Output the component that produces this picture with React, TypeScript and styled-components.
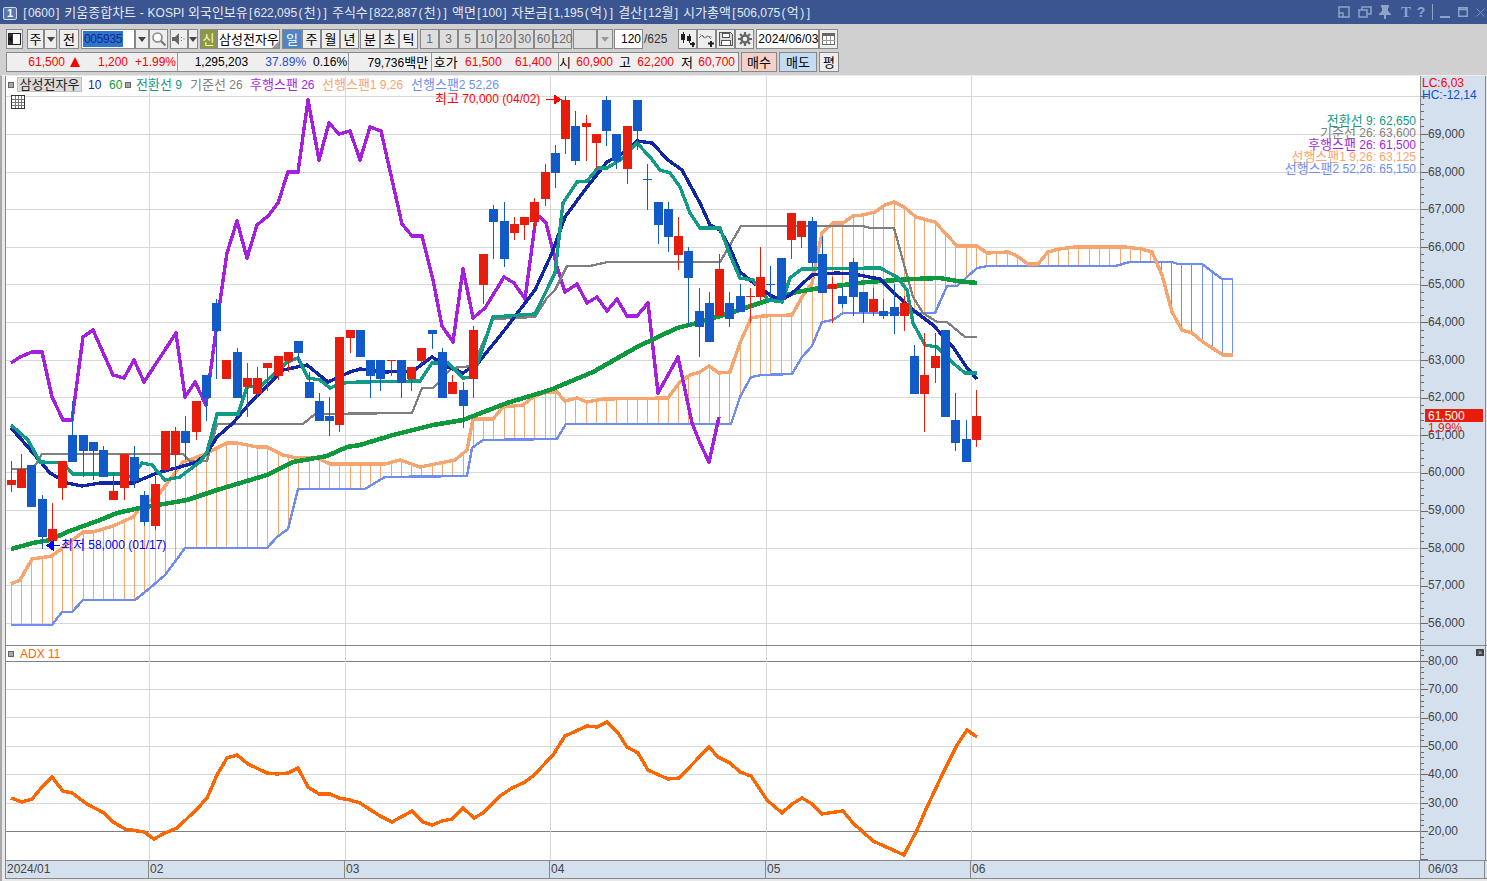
import React from "react";
import styled, { createGlobalStyle } from "styled-components";

const GlobalStyle = createGlobalStyle`
  html, body {
    margin: 0;
    padding: 0;
    background: #d0d0d0;
    overflow: hidden;
  }
  body {
    font-family: "Liberation Sans", "Noto Sans CJK KR", sans-serif;
    font-size: 12px;
    line-height: 1;
  }
`;

// candles as [up, bodyTop, bodyBottom, wickTop, wickBottom], in page pixels
type Candle = [number, number, number, number, number];

const candles: Candle[] = [
  [1, 480, 485, 461, 492], [1, 469, 488, 454, 488], [0, 465, 507, 465, 507], [0, 499, 537, 495, 549],
  [1, 529, 541, 503, 541], [1, 461, 488, 461, 500], [0, 435, 462, 401, 462], [0, 435, 451, 435, 477],
  [0, 442, 451, 442, 480], [0, 450, 477, 446, 477], [1, 491, 500, 472, 500], [1, 454, 488, 454, 500],
  [0, 457, 481, 446, 488], [0, 495, 522, 491, 526], [1, 484, 526, 476, 530], [1, 431, 470, 431, 473],
  [1, 431, 455, 427, 478], [0, 431, 443, 416, 460], [1, 401, 432, 401, 440], [0, 375, 398, 375, 421],
  [0, 303, 331, 299, 379], [1, 360, 379, 360, 379], [0, 352, 398, 348, 398], [1, 378, 387, 363, 417],
  [1, 378, 394, 367, 398], [1, 363, 368, 363, 391], [1, 356, 376, 356, 380], [1, 352, 361, 352, 372],
  [0, 341, 353, 341, 363], [0, 382, 398, 372, 398], [0, 401, 421, 393, 421], [0, 416, 421, 397, 436],
  [1, 337, 425, 337, 432], [1, 330, 338, 330, 353], [0, 330, 357, 330, 357], [0, 360, 376, 360, 398],
  [0, 360, 379, 360, 391], [1, 360, 361, 360, 376], [0, 360, 383, 360, 398], [1, 367, 379, 367, 391],
  [1, 348, 361, 348, 365], [0, 330, 334, 330, 349], [0, 352, 398, 348, 398], [1, 382, 394, 375, 394],
  [0, 390, 406, 382, 428], [1, 330, 379, 326, 398], [1, 254, 285, 254, 304], [0, 209, 222, 205, 259],
  [0, 221, 259, 202, 267], [1, 224, 233, 217, 240], [1, 217, 225, 217, 240], [1, 202, 222, 198, 229],
  [1, 172, 199, 164, 206], [0, 153, 173, 145, 188], [1, 100, 139, 96, 154], [0, 126, 161, 111, 165],
  [1, 123, 127, 115, 161], [1, 134, 143, 134, 169], [0, 100, 131, 96, 146], [0, 134, 161, 134, 169],
  [1, 126, 169, 126, 184], [0, 100, 131, 100, 150], [0, 179, 180, 164, 210], [0, 202, 225, 202, 244],
  [0, 209, 237, 202, 252], [1, 236, 255, 217, 270], [0, 251, 278, 247, 326], [0, 311, 327, 288, 357],
  [0, 303, 342, 292, 342], [1, 269, 316, 254, 316], [0, 303, 319, 292, 327], [0, 296, 312, 284, 312],
  [1, 296, 297, 288, 323], [1, 277, 297, 247, 300], [0, 284, 285, 266, 300], [0, 258, 300, 258, 300],
  [1, 213, 240, 213, 259], [1, 221, 237, 221, 248], [0, 221, 263, 217, 267], [0, 254, 293, 236, 293],
  [1, 284, 289, 277, 323], [0, 296, 304, 287, 308], [0, 262, 297, 258, 316], [0, 292, 312, 292, 323],
  [1, 299, 312, 288, 316], [0, 311, 316, 299, 319], [0, 307, 316, 284, 334], [1, 303, 316, 296, 331],
  [0, 356, 394, 345, 394], [1, 375, 394, 333, 432], [1, 356, 368, 333, 383], [0, 330, 417, 330, 417],
  [0, 420, 443, 393, 451], [0, 439, 462, 420, 462], [1, 416, 440, 390, 447],
];

type Pt = [number, number];

const ma10: Pt[] = [[11,428],[20,438],[33,453],[50,473],[67,483],[82,486],[100,483],[133,483],[157,473],[180,467],[197,462],[207,453],[217,437],[233,423],[250,403],[263,390],[283,370],[307,365],[328,382],[350,372],[360,369],[383,372],[413,371],[432,357],[448,367],[463,373],[478,363],[503,332],[535,290],[552,253],[565,217],[587,187],[607,162],[623,153],[637,141],[652,143],[668,160],[682,170],[700,203],[710,225],[720,230],[730,248],[740,272],[750,280],[770,295],[780,300],[790,295],[812,275],[837,273],[853,274],[880,279],[893,292],[913,310],[933,325],[953,347],[967,368],[977,379]];

const conversion: Pt[] = [[11,425],[28,440],[40,462],[63,463],[73,474],[120,474],[132,477],[142,463],[152,465],[165,480],[180,477],[200,462],[207,452],[217,414],[238,414],[247,387],[262,385],[287,362],[298,358],[308,378],[320,380],[330,388],[343,383],[360,382],[420,381],[432,363],[448,363],[463,378],[473,377],[493,317],[535,314],[555,273],[563,203],[577,182],[587,181],[598,168],[607,168],[623,158],[637,143],[650,157],[660,170],[670,173],[680,187],[690,213],[700,228],[720,228],[730,255],[740,278],[753,280],[768,300],[782,302],[790,278],[802,269],[880,268],[897,277],[907,290],[913,323],[925,345],[937,347],[953,363],[965,373],[977,373]];

const base: Pt[] = [[11,469],[33,469],[42,454],[183,454],[190,461],[207,461],[217,424],[303,424],[315,414],[412,413],[422,388],[433,388],[452,368],[473,366],[493,319],[535,317],[547,298],[555,290],[567,266],[590,266],[608,262],[720,262],[741,226],[863,226],[870,228],[894,228],[913,297],[923,313],[937,322],[947,322],[965,337],[977,337]];

const lagging: Pt[] = [[11,363],[20,357],[32,352],[42,352],[52,397],[63,420],[72,420],[83,337],[93,330],[113,375],[124,378],[134,360],[144,382],[176,333],[185,397],[195,382],[206,405],[217,323],[227,253],[237,221],[247,258],[257,225],[268,216],[278,203],[288,172],[298,172],[308,100],[319,160],[329,123],[339,134],[350,131],[360,160],[370,127],[381,131],[402,224],[412,236],[422,236],[433,280],[442,326],[453,342],[463,269],[473,318],[485,308],[504,277],[514,283],[525,299],[536,217],[540,217],[546,223],[557,267],[565,292],[577,284],[587,303],[597,297],[607,311],[617,299],[627,316],[637,316],[648,303],[658,393],[678,357],[692,423],[700,443],[709,462],[719,417]];

const span1: Pt[] = [[11,584],[20,580],[32,559],[52,556],[83,532],[93,532],[113,526],[133,517],[140,508],[160,493],[183,462],[203,455],[227,443],[237,443],[257,447],[267,447],[283,455],[297,458],[317,458],[330,464],[385,464],[400,460],[420,467],[440,463],[455,460],[467,450],[473,419],[493,419],[503,407],[523,405],[533,397],[547,392],[557,392],[565,401],[577,398],[587,402],[603,399],[668,398],[680,382],[690,375],[700,372],[709,366],[719,373],[730,372],[740,343],[751,318],[762,316],[792,315],[802,297],[812,283],[817,257],[822,233],[833,223],[843,223],[853,216],[863,215],[875,212],[885,205],[894,202],[904,207],[916,217],[935,222],[947,235],[957,246],[977,246],[987,253],[1008,252],[1017,256],[1028,264],[1038,264],[1048,252],[1059,249],[1075,247],[1125,247],[1142,249],[1152,252],[1162,275],[1172,312],[1182,330],[1192,333],[1203,342],[1223,355],[1233,355]];

const span2: Pt[] = [[11,625],[52,625],[62,612],[72,612],[83,600],[135,600],[150,588],[165,575],[177,559],[185,548],[267,548],[277,537],[288,529],[298,489],[365,489],[385,477],[467,476],[472,448],[483,440],[557,439],[566,424],[731,424],[740,397],[751,377],[762,375],[792,374],[802,357],[812,346],[822,322],[833,320],[843,313],[935,313],[947,286],[957,286],[977,268],[988,266],[1115,266],[1130,262],[1172,262],[1178,264],[1202,264],[1222,279],[1233,279]];

const ma60: Pt[] = [[11,549],[33,543],[50,540],[67,532],[100,520],[117,513],[140,508],[187,500],[217,490],[267,475],[293,462],[327,456],[347,447],[360,445],[393,435],[433,425],[463,420],[507,403],[550,390],[593,372],[637,347],[677,328],[697,323],[730,313],[763,302],[797,292],[820,288],[867,282],[913,279],[940,278],[957,281],[977,283]];

const adx: Pt[] = [[11,798],[22,802],[32,799],[42,787],[52,777],[63,791],[72,793],[87,804],[104,813],[113,822],[125,829],[144,832],[154,839],[165,833],[177,828],[197,809],[207,798],[217,775],[227,758],[237,755],[248,764],[267,773],[277,774],[288,773],[298,768],[308,787],[319,794],[330,794],[339,798],[350,800],[360,803],[380,816],[392,822],[412,811],[423,822],[432,825],[442,821],[452,819],[463,808],[474,818],[483,813],[500,796],[512,788],[525,782],[533,776],[553,755],[565,736],[587,726],[597,727],[607,722],[618,733],[627,747],[638,753],[648,770],[668,779],[679,778],[709,747],[718,757],[730,763],[740,772],[751,776],[767,800],[782,813],[792,804],[802,798],[812,804],[822,814],[843,811],[853,823],[873,841],[904,855],[917,830],[927,807],[943,773],[957,745],[967,730],[977,737]];

const priceRows: [string, number][] = [
  ["69,000", 134], ["68,000", 172], ["67,000", 209], ["66,000", 247], ["65,000", 284], ["64,000", 322], ["63,000", 360],
  ["62,000", 397], ["61,000", 435], ["60,000", 472], ["59,000", 510], ["58,000", 548], ["57,000", 585], ["56,000", 623],
];
const adxRows: [string, number][] = [
  ["80,00", 661], ["70,00", 689], ["60,00", 717], ["50,00", 746], ["40,00", 774], ["30,00", 803], ["20,00", 831],
];
const monthLines = [149, 345, 550, 766, 971];

const barX = (i: number) => Math.floor(11.3 + 10.266 * i);
const toPoints = (pts: Pt[]) => pts.map((p) => p.join(",")).join(" ");

const interp = (pts: Pt[], x: number) => {
  for (let i = 1; i < pts.length; i++) {
    if (x <= pts[i][0]) {
      const [x0, y0] = pts[i - 1];
      const [x1, y1] = pts[i];
      return y0 + ((y1 - y0) * (x - x0)) / (x1 - x0);
    }
  }
  return pts[pts.length - 1][1];
};

const Window = styled.div`
  width: 1487px;
  height: 881px;
  display: flex;
  flex-direction: column;
  background: #d0d0d0;
  color: #000;
`;

const TitleBar = styled.header`
  height: 24px;
  display: flex;
  align-items: center;
  background: #3a5590;
  color: #e4e8f2;
  padding: 0 2px 0 3px;
  box-sizing: border-box;
`;

const WinBadge = styled.span`
  width: 14px;
  height: 13px;
  margin-top: 3px;
  border: 1px solid #cfd8ea;
  border-radius: 2px;
  box-sizing: border-box;
  background: #5a78b0;
  color: #fff;
  font-weight: bold;
  font-size: 11px;
  display: flex;
  align-items: center;
  justify-content: center;
`;

const TitleText = styled.span`
  margin-left: 5px;
  white-space: pre;
  word-spacing: 0.4px;
`;

const Bracket = styled.span`
  margin: 0 1.3px;
`;

const Han = styled.span`
  font-size: 13px;
`;

const HanT = styled.tspan`
  font-size: 13px;
`;

const TitleTools = styled.div`
  margin-left: auto;
  display: flex;
  align-items: center;
  color: #8ea3c8;
`;

const TitleTool = styled.span<{ $w: number; $ml?: number }>`
  width: ${(p) => p.$w}px;
  margin-left: ${(p) => p.$ml ?? 0}px;
  height: 16px;
  display: flex;
  justify-content: center;
  align-items: center;
`;

const TitleGlyph = styled(TitleTool)<{ $serif?: boolean }>`
  font-weight: bold;
  font-size: ${(p) => (p.$serif ? 15 : 14)}px;
  font-family: ${(p) => (p.$serif ? '"Liberation Serif", serif' : "inherit")};
`;

const TitleSep = styled(TitleTool)`
  background: #8ea3c8;
`;

const Toolbar = styled.div`
  height: 51px;
  box-sizing: border-box;
  padding: 5px 0 0 6px;
  display: flex;
  flex-direction: column;
  gap: 3px;
`;

const Row = styled.div`
  display: flex;
  height: 20px;
`;

const Group = styled.div<{ $ml?: number }>`
  display: flex;
  margin-left: ${(p) => p.$ml ?? 0}px;
  & > * + * {
    border-left: 0;
  }
`;

const Btn = styled.button<{ $w: number; $tone?: string; $off?: boolean }>`
  width: ${(p) => p.$w}px;
  height: 20px;
  box-sizing: border-box;
  padding: 0;
  border: 1px solid #888;
  font: inherit;
  background: ${(p) => p.$tone ?? (p.$off ? "#dedede" : "#eeeeee")};
  color: ${(p) => (p.$off ? "#6a6a6a" : p.$tone === "#4f86c6" ? "#fff" : "#000")};
  display: flex;
  align-items: center;
  justify-content: center;
`;

const DropBtn = styled(Btn)`
  &::after {
    content: "";
    border-left: 4px solid transparent;
    border-right: 4px solid transparent;
    border-top: 5px solid ${(p) => (p.$off ? "#9a9a9a" : "#444")};
  }
`;

const InputBox = styled.div<{ $w: number; $align?: string }>`
  width: ${(p) => p.$w}px;
  height: 20px;
  box-sizing: border-box;
  border: 1px solid #888;
  background: #fff;
  display: flex;
  align-items: center;
  justify-content: ${(p) => p.$align ?? "flex-start"};
  padding: 0 1px;
`;

const Selected = styled.span`
  background: #2f74cf;
  color: #0c2a86;
  padding: 2px 1px;
  letter-spacing: -0.3px;
`;

const NewBadge = styled.span`
  width: 17px;
  height: 20px;
  box-sizing: border-box;
  border: 1px solid #888;
  background: #8d9a3c;
  color: #f4f6e0;
  display: flex;
  align-items: center;
  justify-content: center;
`;

const StockName = styled.div`
  position: relative;
  width: 63px;
  height: 20px;
  box-sizing: border-box;
  border: 1px solid #888;
  background: #fff;
  padding-left: 1px;
  display: flex;
  align-items: center;
  overflow: hidden;
  white-space: nowrap;
  &::after {
    content: "";
    position: absolute;
    right: 0;
    bottom: 0;
    border-left: 7px solid transparent;
    border-bottom: 7px solid #9a9a9a;
  }
`;

const Plain = styled.span<{ $ml?: number; $c?: string }>`
  margin-left: ${(p) => p.$ml ?? 0}px;
  color: ${(p) => p.$c ?? "#333"};
  align-self: center;
`;

const InfoBar = styled.div`
  width: 733px;
  height: 20px;
  box-sizing: border-box;
  display: flex;
  border: 1px solid #888;
  background: #efefef;
`;

const InfoCell = styled.div<{ $w: number }>`
  width: ${(p) => p.$w}px;
  display: flex;
  align-items: center;
  border-right: 1px solid #999;
  &:last-child {
    border-right: 0;
  }
`;

const Val = styled.span<{ $w: number; $c?: string }>`
  width: ${(p) => p.$w}px;
  text-align: right;
  white-space: nowrap;
  color: ${(p) => p.$c ?? "#000"};
`;

const UpMark = styled.span`
  margin-left: 5px;
  border-left: 5px solid transparent;
  border-right: 5px solid transparent;
  border-bottom: 10px solid #f00;
  width: 0;
  height: 0;
`;

const Chart = styled.div`
  flex: 1;
  display: flex;
  flex-direction: column;
  box-sizing: border-box;
  border-left: 2px solid #a8a8a8;
  padding-left: 3px;
  background: #e8e8e8;
  border-top: 1px solid #ececec;
`;

const Pane = styled.div<{ $h: number }>`
  position: relative;
  height: ${(p) => p.$h}px;
  display: flex;
  box-sizing: border-box;
  border-bottom: 1px solid #888;
`;

const Plot = styled.div`
  width: 1415px;
  box-sizing: border-box;
  border-left: 1px solid #888;
  background: #fff;
  overflow: hidden;
  svg {
    display: block;
  }
`;

const Axis = styled.div`
  width: 66px;
  box-sizing: border-box;
  border-left: 1px solid #888;
  border-right: 1px solid #888;
  background: #d5e0ef;
  overflow: hidden;
  svg {
    display: block;
  }
`;

const Legend = styled.div<{ $top: number }>`
  position: absolute;
  top: ${(p) => p.$top}px;
  left: 3px;
  display: flex;
  align-items: center;
  white-space: pre;
`;

const Square = styled.span<{ $x?: number }>`
  width: 6px;
  height: 6px;
  background: #a8a8a8;
  border: 1px solid #666;
  box-sizing: border-box;
  ${(p) => (p.$x !== undefined ? `position: absolute; left: ${p.$x}px;` : "")}
`;

const StockTag = styled.span`
  margin-left: 3px;
  width: 65px;
  height: 15px;
  box-sizing: border-box;
  border: 1px solid #c0c0c0;
  background: #dcdcdc;
  color: #222;
  display: flex;
  align-items: center;
  justify-content: center;
`;

const LegendItem = styled.span<{ $c: string; $x: number }>`
  position: absolute;
  left: ${(p) => p.$x}px;
  color: ${(p) => p.$c};
`;

const PaneClose = styled.span`
  position: absolute;
  top: 3px;
  right: 3px;
  width: 8px;
  height: 7px;
  background: #444;
  color: #ddd;
  font-size: 7px;
  display: flex;
  align-items: center;
  justify-content: center;
`;

const DateAxis = styled.div`
  height: 18px;
  display: flex;
  box-sizing: border-box;
  border-bottom: 1px solid #888;
  border-left: 1px solid #888;
  background: #d5e0ef;
  color: #444;
`;

const DateCell = styled.div<{ $w: number; $pad?: number }>`
  width: ${(p) => p.$w}px;
  box-sizing: border-box;
  border-right: 1px solid #888;
  padding: 0 0 2px ${(p) => p.$pad ?? 1}px;
  display: flex;
  align-items: center;
`;

const ChartText = styled.text<{ $c?: string }>`
  font-size: 12px;
  fill: ${(p) => p.$c ?? "#444"};
`;

const Mixed = ({ s }: { s: string }) => (
  <>
    {s.split(/([가-힣]+|[\[\]()])/).map((part, i) =>
      /[가-힣]/.test(part) ? (
        <Han key={i}>{part}</Han>
      ) : /^[\[\]()]$/.test(part) ? (
        <Bracket key={i}>{part}</Bracket>
      ) : (
        part
      )
    )}
  </>
);

const MixedT = ({ s }: { s: string }) => (
  <>
    {s.split(/([가-힣]+)/).map((part, i) =>
      /[가-힣]/.test(part) ? <HanT key={i}>{part}</HanT> : part
    )}
  </>
);

const Line = ({ pts, c, w }: { pts: Pt[]; c: string; w: number }) => (
  <polyline points={toPoints(pts)} fill="none" stroke={c} strokeWidth={w} strokeLinejoin="round" shapeRendering="crispEdges" />
);

const Grid = ({ rows, y0, h, dark = [] }: { rows: [string, number][]; y0: number; h: number; dark?: number[] }) => (
  <>
    {rows.map(([, y]) => (
      <rect key={y} x={6} y={y} width={1414} height={1} fill={dark.includes(y) ? "#808080" : "#d8d8d8"} />
    ))}
    {monthLines.map((x) => (
      <rect key={x} x={x} y={y0} width={1} height={h} fill="#d8d8d8" />
    ))}
  </>
);

const PricePlot = () => {
  const hatch = [];
  for (let i = 0; i < 120; i++) {
    const x = barX(i) + 0.5;
    const y1 = interp(span1, x);
    const y2 = interp(span2, x);
    hatch.push(
      <line key={i} x1={x} x2={x} y1={y1} y2={y2} stroke={y1 < y2 ? "#f8a46f" : "#6f8df0"} strokeWidth={1} shapeRendering="crispEdges" />
    );
  }
  return (
    <svg width={1414} height={569} viewBox="6 76 1414 569">
      <Grid rows={[["70,000", 96], ...priceRows]} y0={76} h={569} />
      {hatch}
      <Line pts={span2} c="#6f8df0" w={2.4} />
      <Line pts={span1} c="#f8a46f" w={3.4} />
      <Line pts={lagging} c="#a61fe0" w={3.4} />
      <Line pts={base} c="#7f7f7f" w={2.3} />
      <Line pts={ma60} c="#0e9a3c" w={4.5} />
      <Line pts={ma10} c="#1226a8" w={3.4} />
      <Line pts={conversion} c="#0f9b84" w={3.4} />
      {candles.map(([up, top, bottom, wt, wb], i) => {
        const x = barX(i);
        const c = up ? "#e81c0a" : "#125ac8";
        return (
          <g key={i} fill={c}>
            <rect x={x} y={wt} width={1} height={wb - wt} />
            <rect x={x - 4} y={top} width={9} height={bottom - top} />
          </g>
        );
      })}
      <g>
        <rect x={11.5} y={95.5} width={13} height={13} fill="#fff" stroke="#333" />
        <path d="M12 99h12M12 102h12M12 105h12M15.5 96v12M18.5 96v12M21.5 96v12" stroke="#777" shapeRendering="crispEdges" />
      </g>
      <ChartText x={435} y={103} $c="#f00">
        <MixedT s="최고 70,000 (04/02)" />
      </ChartText>
      <path d="M546 99.5h9M554 95v9l7-4.500z" stroke="#f00" fill="#f00" shapeRendering="crispEdges" />
      <ChartText x={61} y={549} $c="#00f">
        <MixedT s="최저 58,000 (01/17)" />
      </ChartText>
      <path d="M60 545.500h-9M53 541v9l-6-4.500z" stroke="#00f" fill="#00f" shapeRendering="crispEdges" />
      <g textAnchor="end">
        <ChartText x={1416} y={125} $c="#0f9b84"><MixedT s="전환선 9: 62,650" /></ChartText>
        <ChartText x={1416} y={137} $c="#7f7f7f"><MixedT s="기준선 26: 63,600" /></ChartText>
        <ChartText x={1416} y={149} $c="#a61fe0"><MixedT s="후행스팬 26: 61,500" /></ChartText>
        <ChartText x={1416} y={161} $c="#f8a46f"><MixedT s="선행스팬1 9,26: 63,125" /></ChartText>
        <ChartText x={1416} y={173} $c="#6f8df0"><MixedT s="선행스팬2 52,26: 65,150" /></ChartText>
      </g>
    </svg>
  );
};

const AxisTicks = ({ rows, minor, y0, y1 }: { rows: [string, number][]; minor: number; y0: number; y1: number }) => {
  const ticks = [];
  const first = rows[0][1];
  for (let k = -40; k < 200; k++) {
    const y = Math.round(first + k * minor);
    if (y >= y0 && y < y1) ticks.push(<rect key={k} x={1421} y={y} width={k % 5 === 0 ? 7 : 3} height={1} fill="#666" />);
  }
  return <>{ticks}</>;
};

const PriceAxis = () => (
  <svg width={64} height={569} viewBox="1421 76 64 569">
    <AxisTicks rows={priceRows} minor={7.53} y0={96} y1={645} />
    {priceRows.map(([label, y]) => (
      <ChartText key={y} x={1428} y={y + 4}>{label}</ChartText>
    ))}
    <rect x={1425} y={422} width={58} height={8} fill="#d5e0ef" />
    <rect x={1425} y={409} width={58} height={13} fill="#e81c0a" />
    <ChartText x={1428} y={420} $c="#fff">61,500</ChartText>
    <ChartText x={1428} y={432} $c="#e81c0a">1,99%</ChartText>
    <ChartText x={1422} y={87} $c="#f00">LC:6,03</ChartText>
    <ChartText x={1422} y={99} $c="#0a50d8">HC:-12,14</ChartText>
  </svg>
);

const AdxPlot = () => (
  <svg width={1414} height={214} viewBox="6 646 1414 214">
    <Grid rows={adxRows} y0={646} h={214} dark={[661, 831]} />
    <Line pts={adx} c="#ff6600" w={3.4} />
  </svg>
);

const AdxAxis = () => (
  <svg width={64} height={214} viewBox="1421 646 64 214">
    <AxisTicks rows={adxRows} minor={5.67} y0={646} y1={860} />
    {adxRows.map(([label, y]) => (
      <ChartText key={y} x={1428} y={y + 4}>{label}</ChartText>
    ))}
  </svg>
);

const Icon = styled.svg`
  display: block;
`;

const ChartTypeIcon = () => (
  <Icon width={15} height={16} viewBox="0 0 15 16" shapeRendering="crispEdges">
    <rect x={1.500} y={2.500} width={12} height={11} fill="#fff" stroke="#222" />
    <rect x={2} y={3} width={4} height={10} fill="#333" />
    <path d="M1 8l4-3v6z" fill="#111" />
  </Icon>
);

const SearchIcon = () => (
  <Icon width={16} height={16} viewBox="0 0 16 16">
    <circle cx={6.500} cy={6.500} r={4.500} fill="#fff" stroke="#888" strokeWidth={1.600} />
    <path d="M10 10l4.500 4.500" stroke="#777" strokeWidth={2.200} />
  </Icon>
);

const SpeakerIcon = () => (
  <Icon width={16} height={14} viewBox="0 0 16 14">
    <path d="M1 5h3l4-4v12l-4-4H1z" fill="#666" />
    <path d="M10 5h1v1h-1zM10 8h1v1h-1zM12.500 6.500h1v1h-1z" fill="#666" />
  </Icon>
);

const CandleAddIcon = () => (
  <Icon width={17} height={16} viewBox="0 0 17 16" shapeRendering="crispEdges">
    <path d="M4 1v11M10 3v9" stroke="#222" />
    <rect x={2} y={3} width={4} height={6} fill="#222" />
    <rect x={8} y={5} width={4} height={5} fill="#222" />
    <path d="M11 13h5M13.500 11v5" stroke="#222" strokeWidth={2} />
  </Icon>
);

const LineAddIcon = () => (
  <Icon width={17} height={16} viewBox="0 0 17 16">
    <path d="M1 7l3-3 3 3 3-2 3 3" fill="none" stroke="#666" />
    <path d="M2 3l4 4 3-2 5 1" fill="none" stroke="#999" />
    <path d="M10 12.500h6M13 10v6" stroke="#222" strokeWidth={2} />
  </Icon>
);

const SaveIcon = () => (
  <Icon width={16} height={16} viewBox="0 0 16 16" shapeRendering="crispEdges">
    <path d="M1.500 1.500h11l2 2v11h-13z" fill="#ddd" stroke="#555" />
    <rect x={4.500} y={2.500} width={7} height={4} fill="#fff" stroke="#555" />
    <rect x={3.500} y={9.500} width={9} height={5} fill="#fff" stroke="#555" />
  </Icon>
);

const GearIcon = () => (
  <Icon width={16} height={16} viewBox="0 0 16 16">
    <circle cx={8} cy={8} r={3.500} fill="none" stroke="#666" strokeWidth={2.500} />
    <path d="M8 1v3M8 12v3M1 8h3M12 8h3M3 3l2 2M11 11l2 2M13 3l-2 2M5 11l-2 2" stroke="#666" strokeWidth={2.200} />
  </Icon>
);

const CalendarIcon = () => (
  <Icon width={15} height={14} viewBox="0 0 15 14" shapeRendering="crispEdges">
    <rect x={1.500} y={1.500} width={12} height={11} fill="#fff" stroke="#666" />
    <rect x={1} y={1} width={13} height={3} fill="#666" />
    <path d="M1 8h13M5.500 4v8M9.500 4v8" stroke="#999" />
  </Icon>
);

const titleIcon = { fill: "none", stroke: "currentColor", strokeWidth: 1.5 };

const TitleIcons = () => (
  <TitleTools>
    <TitleTool $w={12}>
      <Icon width={12} height={12} viewBox="0 0 12 12" {...titleIcon}>
        <path d="M1 1h10v10H1zM1 7h4v4" />
      </Icon>
    </TitleTool>
    <TitleTool $w={14} $ml={8}>
      <Icon width={14} height={12} viewBox="0 0 14 12" {...titleIcon}>
        <path d="M4 4V1h9v7H9M1 4h8v7H1z" />
      </Icon>
    </TitleTool>
    <TitleTool $w={12} $ml={7}>
      <Icon width={12} height={14} viewBox="0 0 12 14">
        <path d="M2 0h8v2L9 3v3l3 3v1H7v4H5v-4H0V9l3-3V3L2 2z" fill="currentColor" />
      </Icon>
    </TitleTool>
    <TitleGlyph $w={12} $ml={9} $serif>T</TitleGlyph>
    <TitleGlyph $w={12} $ml={3}>?</TitleGlyph>
    <TitleSep $w={1} $ml={5} />
    <TitleTool $w={10} $ml={7}>
      <Icon width={10} height={12} viewBox="0 0 10 12">
        <rect x={0} y={10} width={10} height={2} fill="currentColor" />
      </Icon>
    </TitleTool>
    <TitleTool $w={10} $ml={8}>
      <Icon width={10} height={10} viewBox="0 0 10 10" {...titleIcon}>
        <path d="M.700.700h8.600v8.600H.700zM.700 2.500h8.600" />
      </Icon>
    </TitleTool>
    <TitleTool $w={9} $ml={8}>
      <Icon width={9} height={9} viewBox="0 0 9 9" fill="none" stroke="#7d93bd">
        <path d="M.500.500l8 8M8.500.500l-8 8" />
      </Icon>
    </TitleTool>
  </TitleTools>
);

const App = () => (
  <>
    <GlobalStyle />
    <Window>
      <TitleBar>
        <WinBadge>1</WinBadge>
        <TitleText>
          <Mixed s="[0600] 키움종합차트 - KOSPI 외국인보유[622,095(천)] 주식수[822,887(천)] 액면[100] 자본금[1,195(억)] 결산[12월] 시가총액[506,075(억)]" />
        </TitleText>
        <TitleIcons />
      </TitleBar>
      <Toolbar>
        <Row>
          <Group>
            <Btn $w={17}><ChartTypeIcon /></Btn>
          </Group>
          <Group $ml={4}>
            <Btn $w={17}><Mixed s="주" /></Btn>
            <DropBtn $w={13} />
          </Group>
          <Group $ml={2}>
            <Btn $w={20}><Mixed s="전" /></Btn>
          </Group>
          <Group $ml={2}>
            <InputBox $w={54}><Selected>005935</Selected></InputBox>
            <DropBtn $w={14} />
            <Btn $w={19}><SearchIcon /></Btn>
          </Group>
          <Group $ml={2}>
            <Btn $w={18}><SpeakerIcon /></Btn>
            <DropBtn $w={10} />
          </Group>
          <Group $ml={2}>
            <NewBadge><Mixed s="신" /></NewBadge>
            <StockName><Mixed s="삼성전자우" /></StockName>
          </Group>
          <Group $ml={2}>
            <Btn $w={20} $tone="#4f86c6"><Mixed s="일" /></Btn>
            <Btn $w={19}><Mixed s="주" /></Btn>
            <Btn $w={19}><Mixed s="월" /></Btn>
            <Btn $w={19}><Mixed s="년" /></Btn>
          </Group>
          <Group $ml={1}>
            <Btn $w={20}><Mixed s="분" /></Btn>
            <Btn $w={19}><Mixed s="초" /></Btn>
            <Btn $w={19}><Mixed s="틱" /></Btn>
          </Group>
          <Group $ml={2}>
            {["1", "3", "5", "10", "20", "30", "60", "120"].map((n) => (
              <Btn key={n} $w={19} $off>{n}</Btn>
            ))}
          </Group>
          <Group $ml={1}>
            <Btn $w={24} $off />
            <DropBtn $w={16} $off />
          </Group>
          <Group $ml={1}>
            <InputBox $w={29} $align="flex-end"><Plain $c="#000">120</Plain></InputBox>
          </Group>
          <Plain $ml={1}>/625</Plain>
          <Group $ml={11}>
            <Btn $w={19}><CandleAddIcon /></Btn>
            <Btn $w={19}><LineAddIcon /></Btn>
            <Btn $w={19}><SaveIcon /></Btn>
            <Btn $w={19}><GearIcon /></Btn>
          </Group>
          <Group $ml={2}>
            <InputBox $w={63}><Plain $c="#000">2024/06/03</Plain></InputBox>
            <Btn $w={19}><CalendarIcon /></Btn>
          </Group>
        </Row>
        <Row>
          <InfoBar>
            <InfoCell $w={171}>
              <Val $w={58} $c="#f00">61,500</Val>
              <UpMark />
              <Val $w={48} $c="#f00">1,200</Val>
              <Val $w={48} $c="#f00">+1.99%</Val>
            </InfoCell>
            <InfoCell $w={171}>
              <Val $w={70}>1,295,203</Val>
              <Val $w={58} $c="#1a50d0">37.89%</Val>
              <Val $w={41}>0.16%</Val>
            </InfoCell>
            <InfoCell $w={82}>
              <Val $w={79}><Mixed s="79,736백만" /></Val>
            </InfoCell>
            <InfoCell $w={127}>
              <Val $w={26}><Mixed s="호가" /></Val>
              <Val $w={44} $c="#f00">61,500</Val>
              <Val $w={50} $c="#f00">61,400</Val>
            </InfoCell>
            <InfoCell $w={180}>
              <Val $w={12}><Mixed s="시" /></Val>
              <Val $w={42} $c="#f00">60,900</Val>
              <Val $w={18}><Mixed s="고" /></Val>
              <Val $w={43} $c="#f00">62,200</Val>
              <Val $w={19}><Mixed s="저" /></Val>
              <Val $w={42} $c="#f00">60,700</Val>
            </InfoCell>
          </InfoBar>
          <Group $ml={2}>
            <Btn $w={36} $tone="#f4d0c8"><Mixed s="매수" /></Btn>
          </Group>
          <Group $ml={2}>
            <Btn $w={38} $tone="#c4dcf2"><Mixed s="매도" /></Btn>
          </Group>
          <Group $ml={2}>
            <Btn $w={20}><Mixed s="평" /></Btn>
          </Group>
        </Row>
      </Toolbar>
      <Chart>
        <Pane $h={570}>
          <Plot><PricePlot /></Plot>
          <Axis><PriceAxis /></Axis>
          <Legend $top={1}>
            <Square />
            <StockTag><Mixed s="삼성전자우" /></StockTag>
            <LegendItem $x={80} $c="#1226a8">10</LegendItem>
            <LegendItem $x={101} $c="#0e9a3c">60</LegendItem>
            <Square $x={117} />
            <LegendItem $x={128} $c="#0f9b84"><Mixed s="전환선 9" /></LegendItem>
            <LegendItem $x={182} $c="#7f7f7f"><Mixed s="기준선 26" /></LegendItem>
            <LegendItem $x={242} $c="#a61fe0"><Mixed s="후행스팬 26" /></LegendItem>
            <LegendItem $x={314} $c="#f8a46f"><Mixed s="선행스팬1 9,26" /></LegendItem>
            <LegendItem $x={403} $c="#6f8df0"><Mixed s="선행스팬2 52,26" /></LegendItem>
          </Legend>
        </Pane>
        <Pane $h={215}>
          <Plot><AdxPlot /></Plot>
          <Axis><AdxAxis /></Axis>
          <Legend $top={5}>
            <Square />
            <LegendItem $x={12} $c="#ff6600">ADX 11</LegendItem>
          </Legend>
          <PaneClose>×</PaneClose>
        </Pane>
        <DateAxis>
          <DateCell $w={143}>2024/01</DateCell>
          <DateCell $w={196}>02</DateCell>
          <DateCell $w={205}>03</DateCell>
          <DateCell $w={216}>04</DateCell>
          <DateCell $w={205}>05</DateCell>
          <DateCell $w={449}>06</DateCell>
          <DateCell $w={65} $pad={8}>06/03</DateCell>
        </DateAxis>
      </Chart>
    </Window>
  </>
);

export default App;
